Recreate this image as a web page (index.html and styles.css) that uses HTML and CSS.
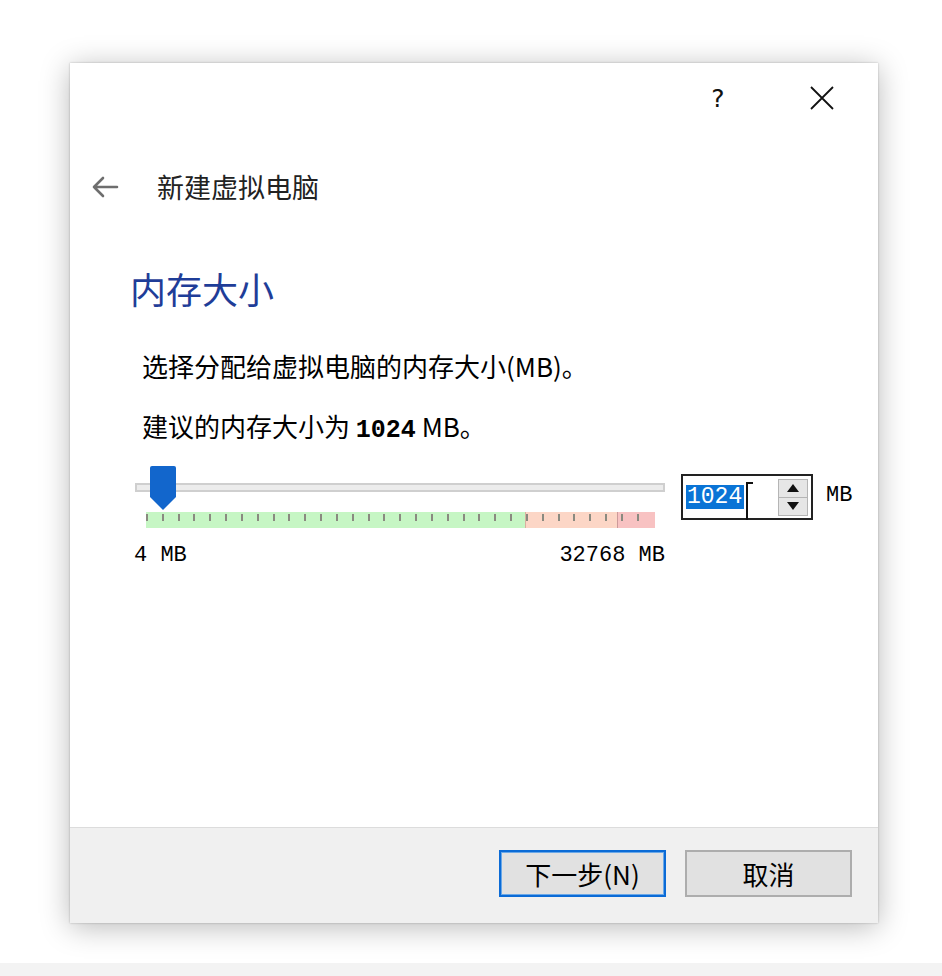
FILE: index.html
```html
<!DOCTYPE html>
<html lang="zh-CN">
<head>
<meta charset="utf-8">
<title>新建虚拟电脑</title>
<link rel="stylesheet" href="styles.css">
</head>
<body>
<div class="dialog">
  <div class="titlebar">
    <div class="tb-btn help">?</div>
    <div class="tb-btn close">
      <svg width="26" height="26" viewBox="0 0 26 26"><path d="M2 2 L24 24 M24 2 L2 24" stroke="#111" stroke-width="1.8" fill="none"/></svg>
    </div>
  </div>
  <div class="header">
    <svg class="back" width="28" height="24" viewBox="0 0 28 24"><path d="M26 12 H3 M12 3 L3 12 L12 21" stroke="#6e6e6e" stroke-width="2.6" fill="none" stroke-linecap="round" stroke-linejoin="round"/></svg>
    <span class="title">新建虚拟电脑</span>
  </div>
  <div class="content">
    <h1 class="heading">内存大小</h1>
    <p class="para first">选择分配给虚拟电脑的内存大小(MB)。</p>
    <p class="para">建议的内存大小为 <b class="mono">1024</b> MB。</p>
    <div class="slider-row">
      <div class="slider">
        <div class="track-wrap">
          <div class="track"></div>
          <svg class="handle" width="26" height="44" viewBox="0 0 26 44"><path d="M2 0 H24 Q26 0 26 2 V31 L13 44 L0 31 V2 Q0 0 2 0 Z" fill="#1266cc"/></svg>
        </div>
        <div class="tickbar">
          <div class="zone green"></div>
          <div class="zone orange"></div>
          <div class="zone red"></div>
          <div class="ticks">
            <i></i><i></i><i></i><i></i><i></i><i></i><i></i><i></i>
            <i></i><i></i><i></i><i></i><i></i><i></i><i></i><i></i>
            <i></i><i></i><i></i><i></i><i></i><i></i><i></i><i></i>
            <i></i><i></i><i></i><i></i><i></i><i></i><i></i><i></i>
          </div>
        </div>
        <div class="labels">
          <span>4 MB</span>
          <span>32768 MB</span>
        </div>
      </div>
      <div class="spinbox">
        <div class="spin-text"><span class="sel">1024</span></div>
        <div class="spin-btns">
          <div class="sb up"><svg width="12" height="8" viewBox="0 0 12 8"><path d="M0 8 L6 0 L12 8 Z" fill="#111"/></svg></div>
          <div class="sb down"><svg width="12" height="8" viewBox="0 0 12 8"><path d="M0 0 L6 8 L12 0 Z" fill="#111"/></svg></div>
        </div>
        <div class="ibeam"></div>
      </div>
      <span class="unit">MB</span>
    </div>
  </div>
  <div class="footer">
    <button class="btn primary">下一步(N)</button>
    <button class="btn">取消</button>
  </div>
</div>
<div class="spacer"></div>
<div class="strip"></div>
</body>
</html>
```
FILE: styles.css
```css
* { box-sizing: border-box; }
html, body { margin: 0; padding: 0; }
body {
  width: 942px;
  height: 976px;
  background: #ffffff;
  display: flex;
  flex-direction: column;
  font-family: "Noto Sans CJK SC", "Noto Sans", sans-serif;
  color: #000;
  overflow: hidden;
}
.dialog {
  width: 808px;
  height: 860px;
  margin: 63px 0 0 70px;
  background: #ffffff;
  display: flex;
  flex-direction: column;
  box-shadow: 0 4px 28px rgba(0,0,0,0.28), 0 0 2px rgba(0,0,0,0.25);
  flex-shrink: 0;
}
.titlebar {
  height: 70px;
  display: flex;
  justify-content: flex-end;
  align-items: center;
  gap: 56px;
  padding-right: 32px;
}
.tb-btn {
  width: 48px;
  height: 40px;
  display: flex;
  align-items: center;
  justify-content: center;
}
.help {
  font-family: "DejaVu Sans", sans-serif;
  font-size: 25px;
  color: #111;
}
.header {
  height: 40px;
  margin-top: 34px;
  padding-left: 21px;
  display: flex;
  align-items: center;
}
.back { margin-right: 38px; }
.title {
  font-size: 27px;
  color: #222;
  line-height: 40px;
}
.content {
  padding-left: 60px;
  display: flex;
  flex-direction: column;
}
.heading {
  margin: 59px 0 0 0;
  font-size: 36px;
  font-weight: 400;
  line-height: 44px;
  color: #1f3d98;
}
.para {
  margin: 20px 0 0 12px;
  height: 40px;
  font-size: 26px;
  line-height: 40px;
  color: #000;
}
.para.first { margin-top: 36px; }
.mono {
  font-family: "Liberation Mono", monospace;
  font-size: 25px;
  font-weight: 700;
  line-height: 0;
}
.slider-row {
  margin: 20px 0 0 5px;
  display: flex;
  align-items: flex-start;
}
.slider { width: 530px; }
.track-wrap {
  position: relative;
  height: 44px;
  padding-top: 17px;
}
.track {
  height: 9px;
  background: #ececec;
  border: 2px solid #cfcfcf;
}
.handle {
  position: absolute;
  left: 15px;
  top: 0;
}
.tickbar {
  position: relative;
  margin: 2px 0 0 11px;
  width: 509px;
  height: 16px;
  display: flex;
}
.zone { height: 16px; }
.green { width: 379px; background: #c6f6c4; }
.orange { width: 92px; background: #fcd6c6; border-left: 1px solid #d9b0a0; }
.red { width: 38px; background: #f8c2c2; border-left: 1px solid #cc9a9a; }
.ticks {
  position: absolute;
  left: 0;
  top: 2px;
  width: 493px;
  display: flex;
  justify-content: space-between;
}
.ticks i {
  display: block;
  width: 2px;
  height: 7px;
  background: #8a8a80;
}
.labels {
  margin: 16px 0 0 -1px;
  display: flex;
  justify-content: space-between;
  font-family: "Liberation Mono", monospace;
  font-size: 22px;
  line-height: 24px;
}
.spinbox {
  position: relative;
  margin: 8px 0 0 16px;
  width: 132px;
  height: 46px;
  border: 2px solid #222;
  display: flex;
  align-items: center;
  background: #fff;
}
.spin-text {
  flex: 1;
  padding-left: 3px;
  display: flex;
  align-items: center;
}
.sel {
  background: #0a74d6;
  color: #fff;
  font-family: "Liberation Mono", monospace;
  font-size: 23px;
  line-height: 24px;
  padding: 0 2px 0 1px;
}
.spin-btns {
  width: 30px;
  height: 37px;
  margin-right: 3px;
  border: 1px solid #b5b5b5;
  display: flex;
  flex-direction: column;
}
.sb {
  flex: 1;
  background: #e6e6e6;
  display: flex;
  align-items: center;
  justify-content: center;
}
.sb.up { border-bottom: 1px solid #b5b5b5; }
.ibeam {
  position: absolute;
  left: 63px;
  top: 6px;
  width: 2px;
  height: 38px;
  background: #111;
}
.ibeam::after {
  content: "";
  position: absolute;
  left: 0;
  top: 0;
  width: 7px;
  height: 2px;
  background: #111;
}
.unit {
  margin: 18px 0 0 13px;
  font-family: "Liberation Mono", monospace;
  font-size: 22px;
  line-height: 24px;
}
.footer {
  margin-top: auto;
  height: 96px;
  border-top: 1px solid #dcdcdc;
  background: #f0f0f0;
  display: flex;
  justify-content: flex-end;
  align-items: flex-start;
  gap: 19px;
  padding: 22px 26px 0 0;
}
.btn {
  width: 167px;
  height: 47px;
  background: #e1e1e1;
  border: 2px solid #adadad;
  font-family: "Noto Sans CJK SC", sans-serif;
  font-size: 26px;
  color: #000;
  padding: 0;
  line-height: 40px;
}
.btn.primary {
  border: 2px solid #0b6bd6;
  box-shadow: inset 0 0 0 1px #6aa8e8;
}
.spacer { flex: 1; }
.strip {
  height: 13px;
  background: #f3f3f3;
}
```
